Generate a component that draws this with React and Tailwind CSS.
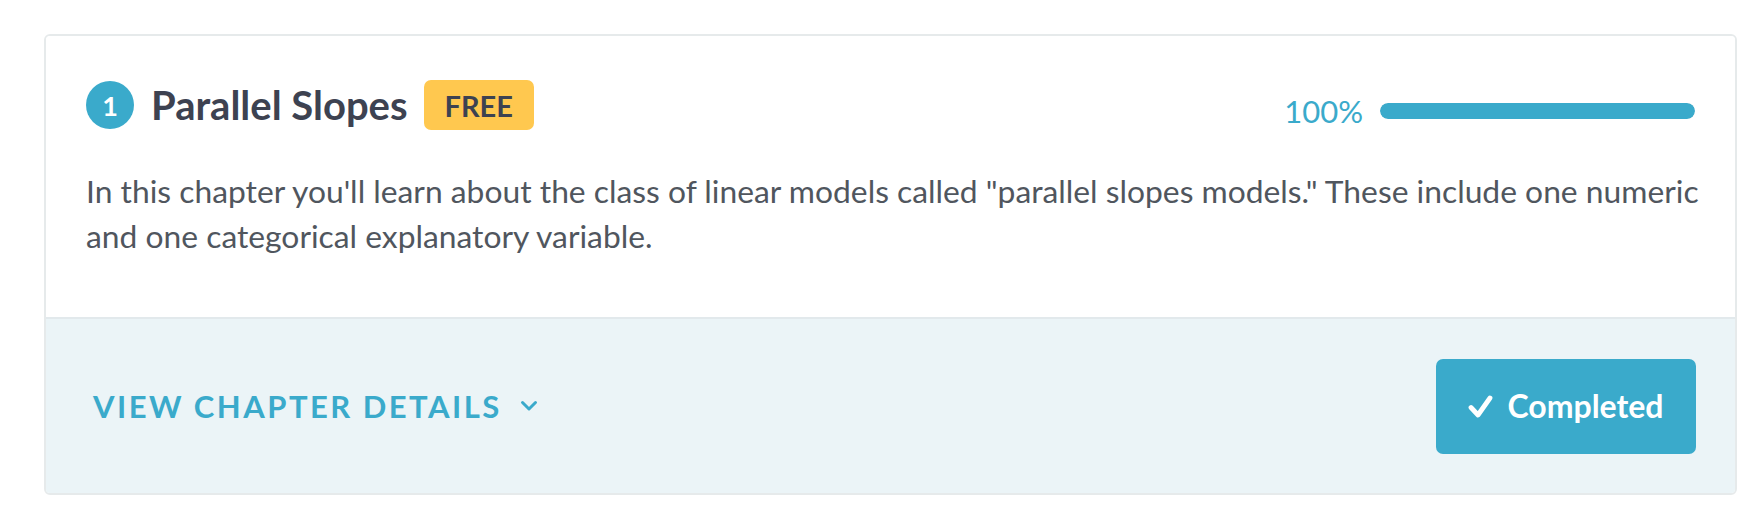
import React from 'react';

function CheckIcon() {
    return (
        <svg width="25" height="23" viewBox="0 0 25 23" fill="none">
            <polyline points="3,12.5 10,20 22,3" stroke="white" strokeWidth="4.8" strokeLinecap="round" strokeLinejoin="round" />
        </svg>
    );
}

function ChevronDown() {
    return (
        <svg width="18" height="12" viewBox="0 0 18 12" fill="none">
            <polyline points="2.5,2.5 9,9 15.5,2.5" stroke="#3aaacb" strokeWidth="3" strokeLinecap="round" strokeLinejoin="round" />
        </svg>
    );
}

export default function App() {
    return (
        <div className="min-h-[528px] bg-white pt-[34px] pl-[44px] font-['Lato',_'Liberation_Sans',_sans-serif]">
            <div className="w-[1693px] rounded-[6px] border-2 border-[#e6eaeb] overflow-hidden">
                {/* Chapter header */}
                <div className="bg-white px-[40px] pt-[44px] pb-[58px]">
                    <div className="flex items-center justify-between h-[50px]">
                        <div className="flex items-center">
                            <div className="w-[48px] h-[48px] rounded-full bg-[#3aaacb] flex items-center justify-center">
                                <span className="text-white text-[27px] font-bold leading-none">1</span>
                            </div>
                            <h2 className="ml-[17px] text-[40px] font-bold text-[#3d4251] leading-none">Parallel Slopes</h2>
                            <span className="ml-[16px] h-[50px] px-[21px] rounded-[7px] bg-[#ffc84f] flex items-center text-[29px] font-bold text-[#3d4251] leading-none">
                                FREE
                            </span>
                        </div>
                        <div className="flex items-center mt-[12px]">
                            <span className="text-[31px] text-[#3aaacb] leading-none">100%</span>
                            <div className="ml-[17px] w-[315px] h-[16px] rounded-full bg-[#e6eaeb] overflow-hidden">
                                <div className="h-full rounded-full bg-[#3aaacb]" style={{ width: '100%' }} />
                            </div>
                        </div>
                    </div>
                    <p className="mt-[39px] mr-[-12px] text-[31.8px] leading-[45px] text-[#50565e]">
                        In this chapter you'll learn about the class of linear models called "parallel slopes models." These include one numeric and one categorical explanatory variable.
                    </p>
                </div>

                {/* Footer */}
                <div className="h-[176px] bg-[#ebf4f7] border-t-2 border-[#e2e9ec] flex items-center justify-between pl-[47px] pr-[39px]">
                    <button className="flex items-center gap-[18px] text-[31px] font-bold tracking-[0.08em] text-[#3aaacb] leading-none">
                        VIEW CHAPTER DETAILS
                        <ChevronDown />
                    </button>
                    <button className="w-[260px] h-[95px] rounded-[7px] bg-[#3aaacb] flex items-center justify-center gap-[14px] text-white text-[32px] font-bold leading-none">
                        <CheckIcon />
                        Completed
                    </button>
                </div>
            </div>
        </div>
    );
}
